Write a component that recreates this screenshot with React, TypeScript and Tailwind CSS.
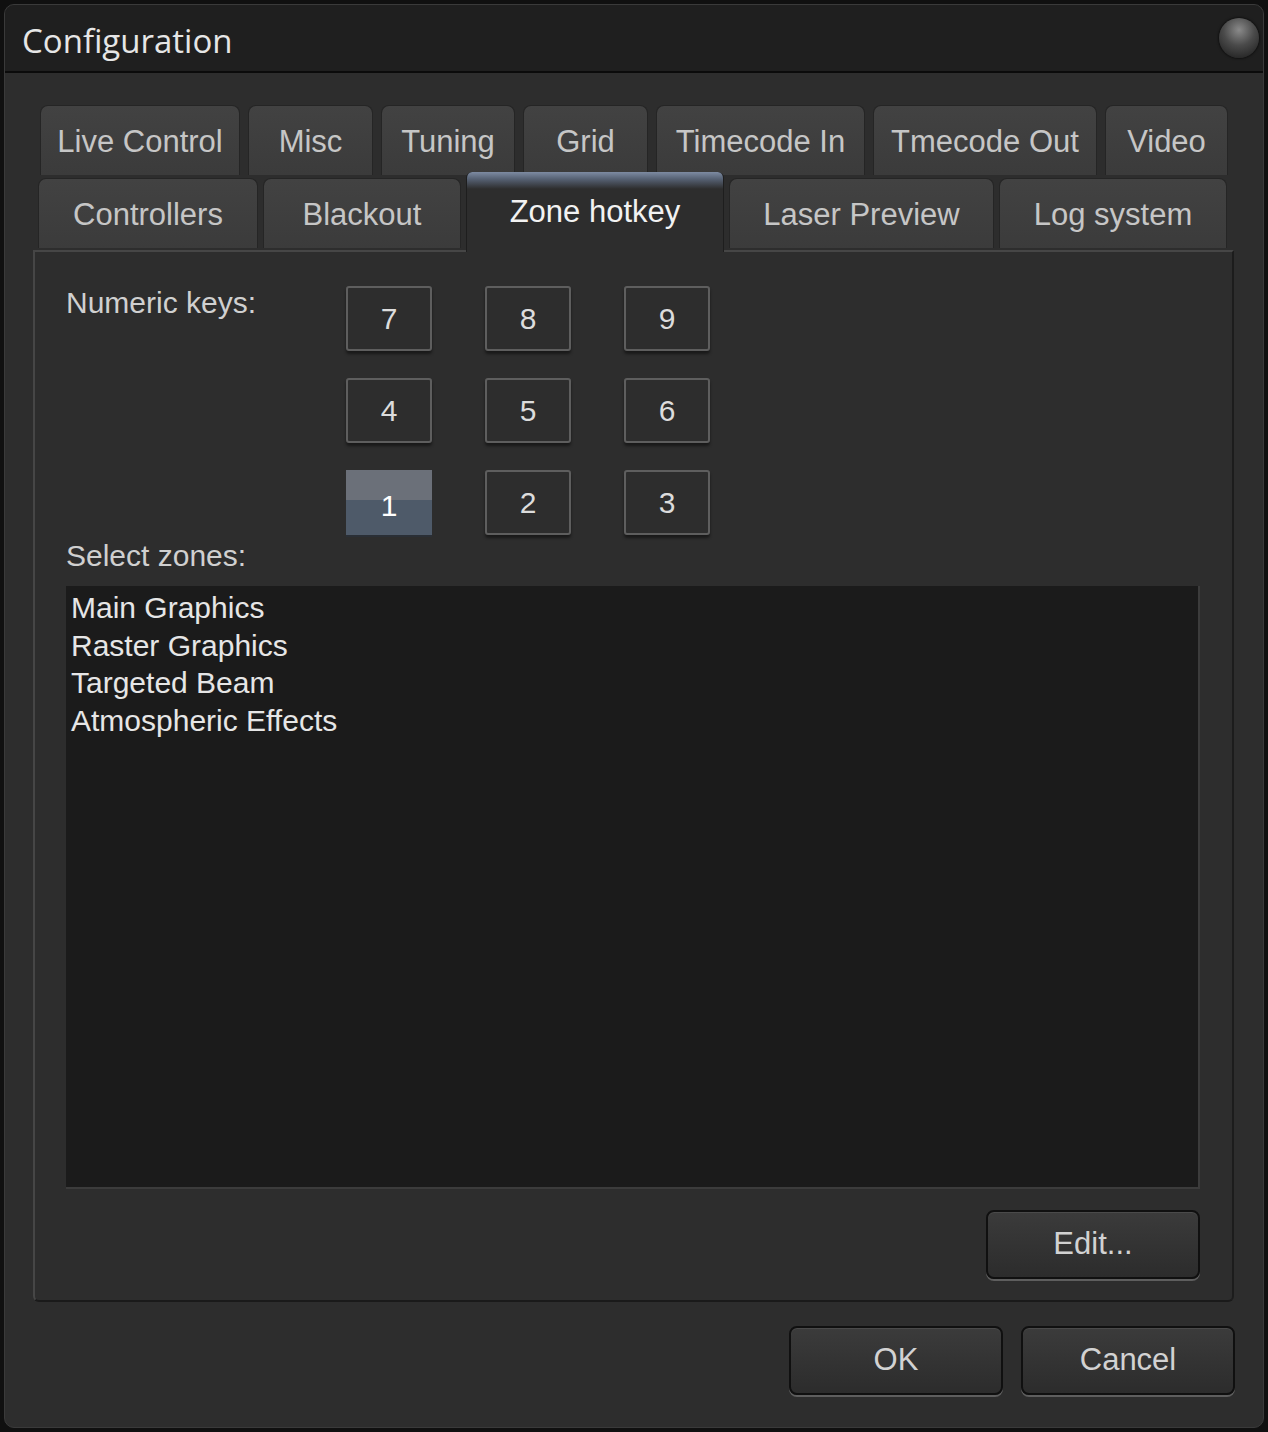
import React from "react";

const ui = "font-['Liberation_Sans',Arial,sans-serif]";

const topTabs = [
  { label: "Live Control", w: "w-[200px]" },
  { label: "Misc", w: "w-[125px]" },
  { label: "Tuning", w: "w-[134px]" },
  { label: "Grid", w: "w-[125px]" },
  { label: "Timecode In", w: "w-[209px]" },
  { label: "Tmecode Out", w: "w-[224px]" },
  { label: "Video", w: "w-[123px]" },
];

const bottomTabs = [
  { label: "Controllers", w: "w-[220px]", active: false },
  { label: "Blackout", w: "w-[198px]", active: false },
  { label: "Zone hotkey", w: "w-[258px]", active: true },
  { label: "Laser Preview", w: "w-[265px]", active: false },
  { label: "Log system", w: "w-[228px]", active: false },
];

const keys = ["7", "8", "9", "4", "5", "6", "1", "2", "3"];

const zones = ["Main Graphics", "Raster Graphics", "Targeted Beam", "Atmospheric Effects"];

function Tab({ label, w }: { label: string; w: string }) {
  return (
    <div
      className={`${w} h-[70px] flex items-center justify-center pt-[4px] rounded-t-[8px] border border-b-0 border-[#252525] bg-[linear-gradient(#424242,#3b3b3b)] text-[31px] text-[#c6c6c6]`}
    >
      {label}
    </div>
  );
}

function ActiveTab({ label, w }: { label: string; w: string }) {
  return (
    <div
      className={`${w} relative z-10 h-[80px] -mb-[4px] flex items-start justify-center pt-[17px] rounded-t-[6px] border-x border-[#1e1e1e] bg-[linear-gradient(#7d8ba2,#566173_7px,#2d2d2d_17px,#2d2d2d)] text-[31px] text-[#f2f2f2]`}
    >
      {label}
    </div>
  );
}

function PushButton({ label }: { label: string }) {
  return (
    <button className="w-[214px] h-[69px] rounded-[8px] border-2 border-[#101010] bg-[linear-gradient(#3b3b3b,#2c2c2c)] shadow-[0_2px_0_#5e5e5e,inset_0_1px_0_#4a4a4a] text-[31px] text-[#d2d2d2]">
      {label}
    </button>
  );
}

export default function App() {
  return (
    <div className={`${ui} w-[1268px] h-[1432px] bg-[#101010] p-[4px]`}>
      <div className="h-full flex flex-col rounded-[10px] border border-[#3a3a3a] bg-[#2d2d2d] overflow-hidden">
        {/* title bar */}
        <div className="h-[68px] shrink-0 flex items-center justify-between pl-[17px] pr-[4px] bg-[#1f1f1f] border-b-2 border-[#0b0b0b]">
          <span className="pt-[5px] font-['Open_Sans',sans-serif] text-[33px] text-[#e6e6e6]">Configuration</span>
          <div className="w-[40px] h-[40px] rounded-full bg-[radial-gradient(circle_at_50%_30%,#8a8a8a,#4a4a4a_45%,#2a2a2a_80%)] shadow-[0_0_3px_#000]" />
        </div>

        <div className="flex-1 flex flex-col pl-[28px] pr-[29px] pt-[32px]">
          {/* tabs */}
          <div className="flex gap-[8px] ml-[7px]">
            {topTabs.map((t) => (
              <Tab key={t.label} label={t.label} w={t.w} />
            ))}
          </div>
          <div className="flex items-end gap-[5px] ml-[5px] mt-[3px] h-[70px]">
            {bottomTabs.map((t) =>
              t.active ? (
                <ActiveTab key={t.label} label={t.label} w={t.w} />
              ) : (
                <Tab key={t.label} label={t.label} w={t.w} />
              )
            )}
          </div>

          {/* panel */}
          <div className="mt-[2px] flex flex-col pl-[31px] pr-[32px] pt-[34px] pb-[21px] rounded-b-[6px] border-2 border-t-[#464646] border-l-[#464646] border-r-[#1c1c1c] border-b-[#1a1a1a]">
            <div className="flex">
              <div className="w-[280px] leading-[34px] text-[30px] text-[#d0d0d0]">Numeric keys:</div>
              <div className="grid grid-cols-3 gap-x-[53px] gap-y-[27px]">
                {keys.map((k) =>
                  k === "1" ? (
                    <div
                      key={k}
                      className="w-[86px] h-[65px] flex items-center justify-center pt-[6px] bg-[linear-gradient(#6b7079_0,#6b7079_46%,#4e5a69_46%,#4e5a69)] shadow-[0_2px_0_#2a2f36] text-[30px] text-white"
                    >
                      {k}
                    </div>
                  ) : (
                    <div
                      key={k}
                      className="w-[86px] h-[65px] flex items-center justify-center rounded-[3px] border-2 border-[#5e5e5e] bg-[#2d2d2d] shadow-[0_3px_3px_rgba(0,0,0,0.45)] text-[30px] text-[#dcdcdc]"
                    >
                      {k}
                    </div>
                  )
                )}
              </div>
            </div>

            <div className="mt-[4px] leading-[34px] text-[30px] text-[#d0d0d0]">Select zones:</div>

            <div className="mt-[13px] h-[603px] bg-[#1b1b1b] border-b-2 border-r-2 border-[#3c3c3c] pl-[5px] pt-[3px]">
              {zones.map((z) => (
                <div key={z} className="leading-[37.6px] text-[30px] text-[#e6e6e6]">
                  {z}
                </div>
              ))}
            </div>

            <div className="mt-[21px] flex justify-end">
              <PushButton label="Edit..." />
            </div>
          </div>

          {/* dialog buttons */}
          <div className="mt-[24px] flex justify-end gap-[18px] -mr-[1px]">
            <PushButton label="OK" />
            <PushButton label="Cancel" />
          </div>
        </div>
      </div>
    </div>
  );
}
